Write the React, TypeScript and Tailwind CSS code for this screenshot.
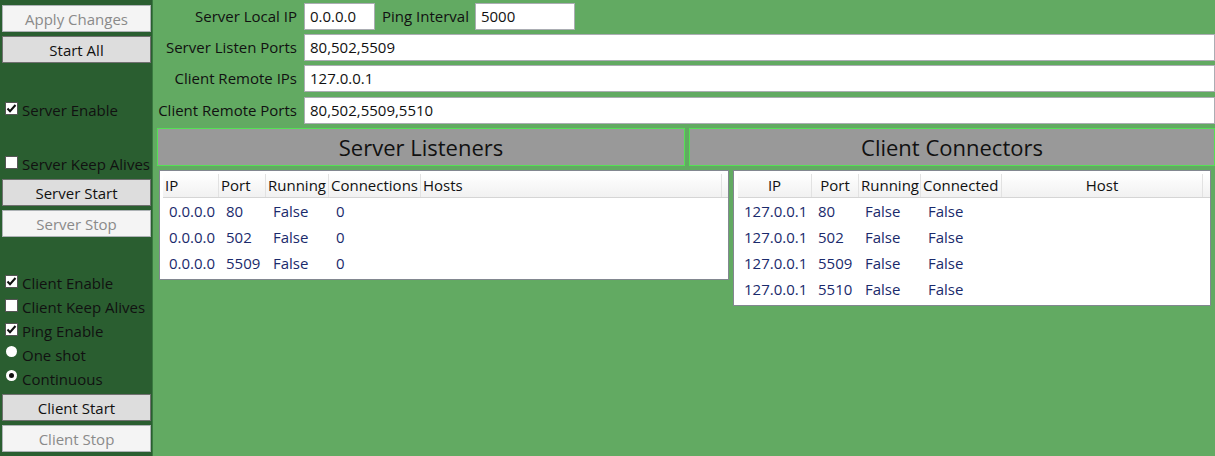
import React from 'react';

const font = { fontFamily: '"Open Sans", "Noto Sans", sans-serif' };

const Btn: React.FC<{ label: string; disabled?: boolean; className?: string }> = ({ label, disabled, className = '' }) => (
  <div
    className={`h-[27px] w-[149px] flex items-center justify-center border text-[15px] leading-none pt-[1px] ${
      disabled ? 'bg-[#f4f4f4] border-[#adb2b5] text-[#8a8a8a]' : 'bg-[#dddddd] border-[#707070] text-[#111]'
    } ${className}`}
  >
    {label}
  </div>
);

const Check: React.FC<{ checked?: boolean }> = ({ checked }) => (
  <div className="w-[13px] h-[13px] bg-white border border-[#555] flex items-center justify-center shrink-0">
    {checked && (
      <svg width="11" height="11" viewBox="0 0 11 11">
        <path d="M1.5 5.5 L4 8.2 L9.5 2" fill="none" stroke="#111" strokeWidth="2" />
      </svg>
    )}
  </div>
);

const Radio: React.FC<{ checked?: boolean }> = ({ checked }) => (
  <div className="w-[11px] h-[11px] rounded-full bg-white flex items-center justify-center shrink-0">
    {checked && <div className="w-[5px] h-[5px] rounded-full bg-[#111]" />}
  </div>
);

const CheckRow: React.FC<{ label: string; checked?: boolean; className?: string }> = ({ label, checked, className = '' }) => (
  <div className={`h-[24px] flex items-center gap-[4px] pl-[3px] text-[15px] text-[#111] whitespace-nowrap ${className}`}>
    <div className="-mt-[3px]">
      <Check checked={checked} />
    </div>
    <span>{label}</span>
  </div>
);

const RadioRow: React.FC<{ label: string; checked?: boolean }> = ({ label, checked }) => (
  <div className="h-[24px] flex items-center gap-[5px] pl-[4px] text-[15px] text-[#111]">
    <div className="-mt-[7px]">
      <Radio checked={checked} />
    </div>
    <span>{label}</span>
  </div>
);

const Field: React.FC<{ value: string; className?: string }> = ({ value, className = '' }) => (
  <div className={`h-[27px] bg-white border border-[#abadb3] flex items-center pl-[5px] text-[15px] text-[#111] ${className}`}>
    {value}
  </div>
);

const Label: React.FC<{ text: string }> = ({ text }) => (
  <div className="w-[147px] shrink-0 text-right pr-[3px] text-[15px] text-[#111]">{text}</div>
);

type Col = { name: string; w: number; center?: boolean; pad: number };

const Table: React.FC<{ cols: Col[]; rows: string[][]; className?: string }> = ({ cols, rows, className = '' }) => (
  <div className={`bg-white border border-[#828790] pt-[3px] pb-[3px] ${className}`}>
    <div className="flex h-[24px] bg-gradient-to-b from-white to-[#f1f1f1] border-b border-[#d5d5d5]">
      {cols.map((c, i) => (
        <div
          key={c.name}
          style={{ width: c.w }}
          className={`h-full flex items-center text-[15px] text-[#111] border-r border-[#e2e2e2] overflow-hidden whitespace-nowrap ${
            c.center ? 'justify-center' : 'pl-[2px]'
          } ${i === cols.length - 1 ? 'border-[#d8d8d8]' : ''}`}
        >
          {c.name}
        </div>
      ))}
    </div>
    {rows.map((r, ri) => (
      <div key={ri} className="flex h-[26px] items-center pt-[1px]">
        {r.map((v, ci) => (
          <div
            key={ci}
            style={{ width: cols[ci].w, paddingLeft: cols[ci].pad }}
            className="text-[15px] text-[#1a2a6c] whitespace-nowrap"
          >
            {v}
          </div>
        ))}
      </div>
    ))}
  </div>
);

const serverCols: Col[] = [
  { name: 'IP', w: 56, pad: 6 },
  { name: 'Port', w: 47, pad: 7 },
  { name: 'Running', w: 63, pad: 7 },
  { name: 'Connections', w: 92, pad: 7 },
  { name: 'Hosts', w: 301, pad: 6 },
];

const clientCols: Col[] = [
  { name: 'IP', w: 74, center: true, pad: 6 },
  { name: 'Port', w: 47, center: true, pad: 6 },
  { name: 'Running', w: 62, pad: 6 },
  { name: 'Connected', w: 81, pad: 7 },
  { name: 'Host', w: 201, center: true, pad: 6 },
];

const App: React.FC = () => {
  return (
    <div className="w-[1215px] h-[456px] flex overflow-hidden bg-[#62aa62]" style={font}>
      {/* Left control panel */}
      <div className="w-[153px] h-full shrink-0 bg-[#2a5e30] border-r border-[#3a7a40] flex flex-col pl-[2px]">
        <Btn label="Apply Changes" disabled className="mt-[5px]" />
        <Btn label="Start All" className="mt-[4px]" />
        <CheckRow label="Server Enable" checked className="mt-[35px]" />
        <CheckRow label="Server Keep Alives" className="mt-[30px]" />
        <Btn label="Server Start" className="mt-[3px]" />
        <Btn label="Server Stop" disabled className="mt-[4px]" />
        <div className="mt-[34px]">
          <CheckRow label="Client Enable" checked />
          <CheckRow label="Client Keep Alives" />
          <CheckRow label="Ping Enable" checked />
          <RadioRow label="One shot" />
          <RadioRow label="Continuous" checked />
        </div>
        <Btn label="Client Start" className="mt-[3px]" />
        <Btn label="Client Stop" disabled className="mt-[4px]" />
      </div>

      {/* Main area */}
      <div className="flex-1 flex flex-col min-w-0">
        <div className="flex items-center mt-[3px]">
          <Label text="Server Local IP" />
          <Field value="0.0.0.0" className="ml-[4px] w-[71px]" />
          <div className="ml-[7px] text-[15px] text-[#111]">Ping Interval</div>
          <Field value="5000" className="ml-[6px] w-[100px]" />
        </div>
        <div className="flex items-center mt-[4px]">
          <Label text="Server Listen Ports" />
          <Field value="80,502,5509" className="ml-[4px] flex-1" />
        </div>
        <div className="flex items-center mt-[4px]">
          <Label text="Client Remote IPs" />
          <Field value="127.0.0.1" className="ml-[4px] flex-1" />
        </div>
        <div className="flex items-center mt-[5px]">
          <Label text="Client Remote Ports" />
          <Field value="80,502,5509,5510" className="ml-[4px] flex-1" />
        </div>

        <div className="flex mt-[4px] pl-[4px] gap-[4px]">
          <div className="w-[528px] h-[38px] bg-[#999999] border border-[#55e055] flex items-center justify-center text-[22px] text-[#111]">
            Server Listeners
          </div>
          <div className="flex-1 h-[38px] bg-[#999999] border border-[#55e055] flex items-center justify-center text-[22px] text-[#111]">
            Client Connectors
          </div>
        </div>

        <div className="flex items-start mt-[4px] pl-[6px] gap-[4px]">
          <Table
            cols={serverCols}
            className="w-[570px] pl-[3px]"
            rows={[
              ['0.0.0.0', '80', 'False', '0', ''],
              ['0.0.0.0', '502', 'False', '0', ''],
              ['0.0.0.0', '5509', 'False', '0', ''],
            ]}
          />
          <Table
            cols={clientCols}
            className="w-[478px] pl-[4px]"
            rows={[
              ['127.0.0.1', '80', 'False', 'False', ''],
              ['127.0.0.1', '502', 'False', 'False', ''],
              ['127.0.0.1', '5509', 'False', 'False', ''],
              ['127.0.0.1', '5510', 'False', 'False', ''],
            ]}
          />
        </div>
      </div>
    </div>
  );
};

export default App;
